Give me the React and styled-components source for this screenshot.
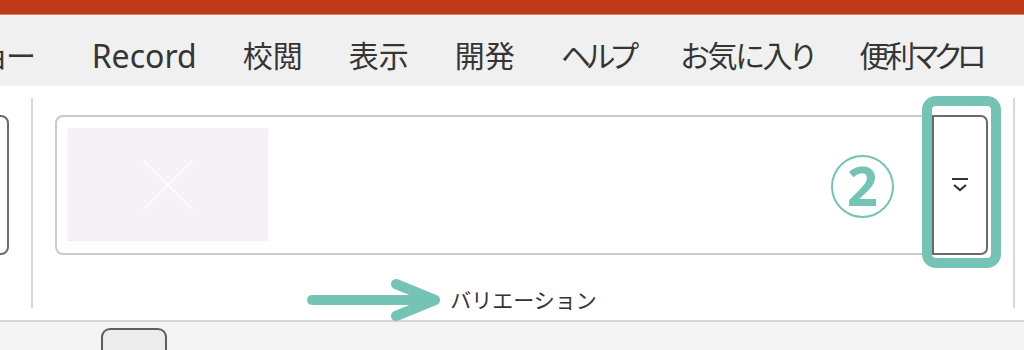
import React from "react";
import styled, { createGlobalStyle } from "styled-components";

const TEAL = "#74C3B5";

const Global = createGlobalStyle`
  html, body { margin: 0; padding: 0; background: #fff; }
  body { font-family: "Noto Sans", "Noto Sans CJK JP", sans-serif; overflow: hidden; }
  * { box-sizing: border-box; }
`;

const Page = styled.div`
  position: relative;
  width: 1024px;
  height: 350px;
  overflow: hidden;
  display: flex;
  flex-direction: column;
  background: #fff;
`;

const TitleStrip = styled.div`
  height: 15px;
  background: #c13b1b;
  border-bottom: 1px solid #e07a5c;
  flex: none;
`;

const TabBar = styled.div`
  height: 71px;
  flex: none;
  background: #f0f0f0;
  border-top: 1px solid #fbfbfb;
  display: flex;
  align-items: center;
  padding-top: 9px;
  margin-left: -170px;
  white-space: nowrap;
`;

const Tab = styled.div`
  padding: 0 23px 0 ${(p) => (p.$latin ? 33 : 23)}px;
  font-size: ${(p) => (p.$latin ? 32 : 30)}px;
  letter-spacing: ${(p) => p.$ls || 0}px;
  line-height: 1;
  color: #353535;
  font-family: "Noto Sans", "Noto Sans CJK JP", sans-serif;
  font-feature-settings: "palt";
`;

const Ribbon = styled.div`
  height: 236px;
  flex: none;
  display: flex;
  background: #fff;
  border-bottom: 2px solid #d6d6d6;
`;

const LeftGroup = styled.div`
  width: 9px;
  overflow: hidden;
  display: flex;
  justify-content: flex-end;
  padding-top: 29px;
`;

const LeftBox = styled.div`
  flex: none;
  width: 60px;
  height: 140px;
  border: 2px solid #6b6b6b;
  border-radius: 8px;
`;

const Separator = styled.div`
  flex: none;
  width: 2px;
  height: 210px;
  margin: 12px 0 0 ${(p) => p.$ml || 0}px;
  background: #d8d8d8;
`;

const GalleryGroup = styled.div`
  width: 980px;
  flex: none;
  padding: 29px 25px 0 22px;
  display: flex;
  flex-direction: column;
  align-items: stretch;
`;

const GalleryFrame = styled.div`
  height: 140px;
  display: flex;
`;

const GalleryItems = styled.div`
  flex: 1;
  border: 2px solid #cbcbcb;
  border-right: none;
  border-radius: 8px 0 0 8px;
  padding: 12px 0 0 12px;
`;

const Placeholder = styled.div`
  width: 198px;
  height: 111px;
  background: #f6f1f6;
  outline: 1px dotted #ebe3eb;
  display: flex;
  align-items: center;
  justify-content: center;
`;

const ScrollButton = styled.div`
  width: 56px;
  flex: none;
  border: 2px solid #6a6a6a;
  border-radius: 0 7px 7px 0;
  display: flex;
  align-items: center;
  justify-content: center;
  background: #fff;
`;

const GroupLabel = styled.div`
  margin-top: 34px;
  text-align: center;
  font-family: "Noto Sans CJK JP", sans-serif;
  font-size: 21px;
  line-height: 1;
  color: #333;
  padding-left: 4px;
`;

const BottomBar = styled.div`
  flex: 1;
  background: #f4f4f4;
  padding: 6px 0 0 101px;
`;

const BottomTab = styled.div`
  width: 66px;
  height: 30px;
  background: #ececec;
  border: 2px solid #5e5e5e;
  border-bottom: none;
  border-radius: 9px 9px 0 0;
`;

const Highlight = styled.div`
  position: absolute;
  left: 922px;
  top: 96px;
  width: 79px;
  height: 172px;
  border: 10px solid ${TEAL};
  border-radius: 14px;
`;

const StepBadge = styled.div`
  position: absolute;
  left: 831px;
  top: 155px;
  width: 63px;
  height: 63px;
  border: 2.5px solid ${TEAL};
  border-radius: 50%;
  display: flex;
  align-items: center;
  justify-content: center;
  color: ${TEAL};
  font-family: "Noto Sans", sans-serif;
  font-weight: 700;
  font-size: 54px;
  line-height: 1;
  padding-bottom: 3px;
`;

const ArrowSvg = styled.svg`
  position: absolute;
  left: 302px;
  top: 274px;
`;

const tabs = [
  { label: "スライドショー" },
  { label: "Record", latin: true },
  { label: "校閲" },
  { label: "表示" },
  { label: "開発" },
  { label: "ヘルプ", ls: -4 },
  { label: "お気に入り", ls: -2 },
  { label: "便利マクロ", ls: -4 },
];

export default function App() {
  return (
    <>
      <Global />
      <Page>
        <TitleStrip />
        <TabBar>
          {tabs.map((t) => (
            <Tab key={t.label} $latin={t.latin} $ls={t.ls}>
              {t.label}
            </Tab>
          ))}
        </TabBar>
        <Ribbon>
          <LeftGroup>
            <LeftBox />
          </LeftGroup>
          <Separator $ml={22} />
          <GalleryGroup>
            <GalleryFrame>
              <GalleryItems>
                <Placeholder>
                  <svg width="52" height="52" viewBox="0 0 52 52">
                    <path d="M1 1 L51 51 M51 1 L1 51" stroke="#ffffff" strokeWidth="1.6" fill="none" />
                  </svg>
                </Placeholder>
              </GalleryItems>
              <ScrollButton>
                <svg width="18" height="16" viewBox="0 0 18 16">
                  <path d="M1 2 H17" stroke="#333" strokeWidth="2" />
                  <path d="M3 8 L9 13 L15 8" stroke="#333" strokeWidth="2.2" fill="none" />
                </svg>
              </ScrollButton>
            </GalleryFrame>
            <GroupLabel>バリエーション</GroupLabel>
          </GalleryGroup>
          <Separator />
        </Ribbon>
        <BottomBar>
          <BottomTab />
        </BottomBar>
        <Highlight />
        <StepBadge>2</StepBadge>
        <ArrowSvg width="142" height="52" viewBox="0 0 142 52">
          <path d="M10 26 H130" stroke={TEAL} strokeWidth="10" strokeLinecap="round" fill="none" />
          <path d="M94 10 L133 26 L94 42" stroke={TEAL} strokeWidth="10" strokeLinecap="round" strokeLinejoin="round" fill="none" />
        </ArrowSvg>
      </Page>
    </>
  );
}
